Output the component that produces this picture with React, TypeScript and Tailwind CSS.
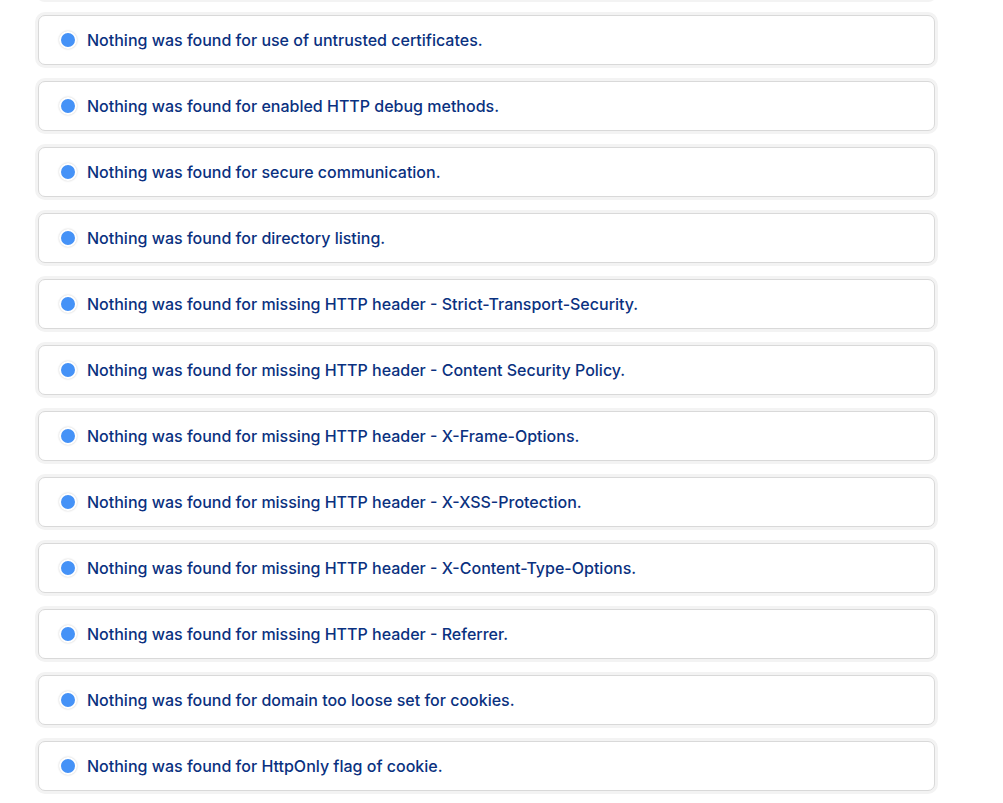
const findings = [
  "Nothing was found for use of untrusted certificates.",
  "Nothing was found for enabled HTTP debug methods.",
  "Nothing was found for secure communication.",
  "Nothing was found for directory listing.",
  "Nothing was found for missing HTTP header - Strict-Transport-Security.",
  "Nothing was found for missing HTTP header - Content Security Policy.",
  "Nothing was found for missing HTTP header - X-Frame-Options.",
  "Nothing was found for missing HTTP header - X-XSS-Protection.",
  "Nothing was found for missing HTTP header - X-Content-Type-Options.",
  "Nothing was found for missing HTTP header - Referrer.",
  "Nothing was found for domain too loose set for cookies.",
  "Nothing was found for HttpOnly flag of cookie.",
];

const cardClass =
  "flex h-[50px] items-center rounded-[7px] border border-[#d9d9d9] bg-white pl-[20px] shadow-[0_0_0_3px_#f3f3f3]";

function FindingRow({ text }: { text: string }) {
  return (
    <div className={cardClass}>
      <span className="size-[18px] shrink-0 rounded-full border-[2px] border-white bg-[#4592f7] shadow-[0_0_2px_rgba(0,0,0,0.22)]" />
      <span className="ml-[10px] text-[16px] font-medium text-[#0a3180]">
        {text}
      </span>
    </div>
  );
}

export default function App() {
  return (
    <main
      className="h-[803px] overflow-hidden bg-white"
      style={{ fontFamily: "Inter, 'Noto Sans', sans-serif" }}
    >
      <div className="-mt-[51px] ml-[38px] flex w-[897px] flex-col gap-[16px]">
        {/* row scrolled out above the viewport */}
        <div className={cardClass} aria-hidden="true" />
        {findings.map((text) => (
          <FindingRow key={text} text={text} />
        ))}
      </div>
    </main>
  );
}
